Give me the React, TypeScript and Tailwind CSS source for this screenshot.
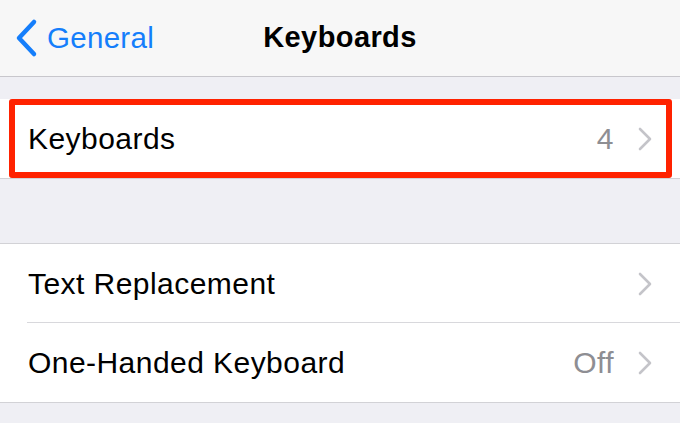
const font = { fontFamily: '"Liberation Sans", Arial, sans-serif' };

function Chevron() {
  return (
    <svg width="16" height="24" viewBox="0 0 16 24" className="shrink-0" aria-hidden>
      <path d="M3 2 L13 12 L3 22" fill="none" stroke="#c4c4c9" strokeWidth="2.6" strokeLinecap="round" strokeLinejoin="round" />
    </svg>
  );
}

function Row({ label, value, divider }: { label: string; value?: string; divider?: boolean }) {
  return (
    <div className="relative flex h-[79px] items-center bg-white pl-[28px] pr-[27px]">
      <span className="flex-1 text-[30px] tracking-[0.45px] text-black">{label}</span>
      {value && <span className="mr-[23px] text-[30px] tracking-[0.45px] text-[#8e8e93]">{value}</span>}
      <Chevron />
      {divider && <div className="absolute bottom-0 left-[27px] right-0 h-px bg-[#d8d8dc]" />}
    </div>
  );
}

export default function App() {
  return (
    <div className="h-[423px] w-[680px] overflow-hidden bg-[#efeff4]" style={font}>
      {/* nav bar */}
      <div className="relative flex h-[77px] items-center border-b border-[#c8c7cc] bg-[#f7f7f7]">
        <div className="flex items-center pl-[14px] text-[#157efb]">
          <svg width="26" height="40" viewBox="0 0 26 40" aria-hidden>
            <path d="M20 4 L5 20 L20 36" fill="none" stroke="#157efb" strokeWidth="4.5" strokeLinecap="round" strokeLinejoin="round" />
          </svg>
          <span className="ml-[7px] text-[29.5px] tracking-[0.3px]">General</span>
        </div>
        <span className="absolute left-1/2 -translate-x-1/2 text-[29px] font-bold tracking-[0.4px] text-black">Keyboards</span>
      </div>

      <div className="h-[22px]" />

      {/* keyboards group */}
      <div className="relative border-b border-[#d2d2d6]">
        <Row label="Keyboards" value="4" />
        <div className="absolute left-[9px] right-[8px] top-0 bottom-0 rounded-[3px] border-[6px] border-[#ff2200]" />
      </div>

      <div className="h-[64px]" />

      {/* second group */}
      <div className="border-y border-[#d2d2d6]">
        <Row label="Text Replacement" divider />
        <Row label="One-Handed Keyboard" value="Off" />
      </div>
    </div>
  );
}
